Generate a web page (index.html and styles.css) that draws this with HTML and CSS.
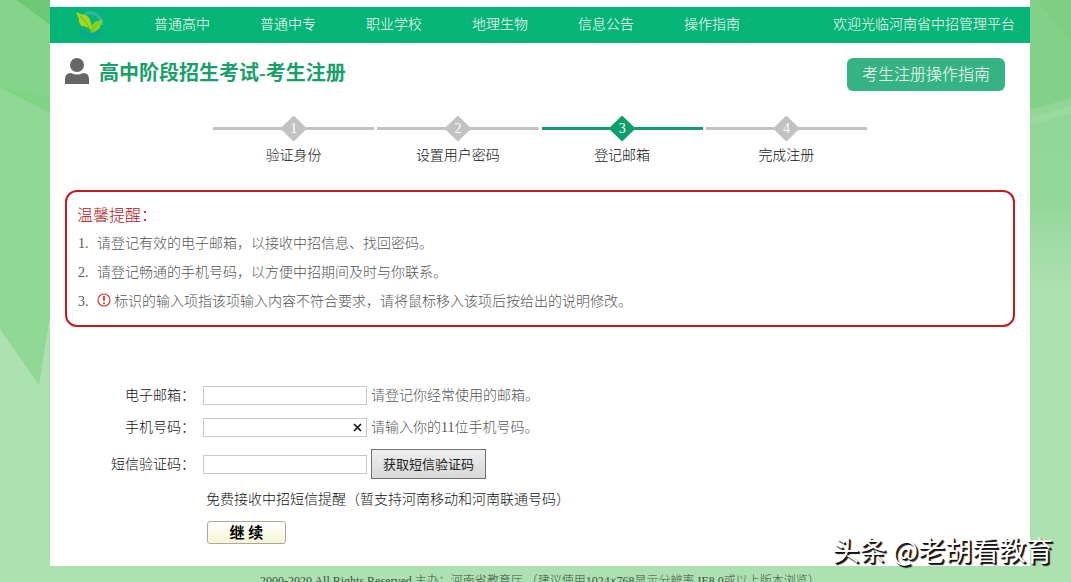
FILE: index.html
```html
<!DOCTYPE html>
<html lang="zh-CN">
<head>
  <meta charset="UTF-8">
  <title>高中阶段招生考试-考生注册</title>
  <link rel="stylesheet" href="styles.css">
</head>
<body>
  <svg class="bg bg-left" width="50" height="390" viewBox="0 0 50 390" aria-hidden="true">
    <path d="M0 0H50V316L39 385L0 329Z" fill="#90d896"/>
    <path d="M0 0H50V113L0 87Z" fill="#85d48b"/>
    <path d="M0 87L50 97V113Z" fill="#80d284"/>
    <path d="M17 0H50V25Z" fill="#6dc974"/>
  </svg>
  <svg class="bg bg-right" width="41" height="290" viewBox="0 0 41 290" aria-hidden="true">
    <defs>
      <linearGradient id="fade" x1="0" y1="0" x2="0" y2="1">
        <stop offset="0" stop-color="#8ed494"/>
        <stop offset=".7" stop-color="#94d79a"/>
        <stop offset="1" stop-color="#aee1b1"/>
      </linearGradient>
    </defs>
    <path d="M0 0H41V290H0Z" fill="url(#fade)"/>
    <path d="M0 0H41V98L0 110Z" fill="#83d088"/>
    <path d="M7 0H41V42Z" fill="#7dce80"/>
    <path d="M0 118L41 106V114L0 125Z" fill="#9adaa0"/>
  </svg>

  <div class="wrap">
    <header class="nav">
      <svg class="logo" width="30" height="28" viewBox="0 0 30 28" aria-hidden="true">
        <path d="M10 3A12 12 0 0 1 27 14" fill="none" stroke="#31b5a8" stroke-width="3"/>
        <path d="M6 18A11 11 0 0 0 26 18" fill="none" stroke="#0ca59a" stroke-width="4"/>
        <path d="M1 1Q6 4 11 4Q17 8 17 20Q12 15 7 15Q3 12 4 8Z" fill="#a4d71a"/>
        <path d="M28 9Q24 9 20 11Q15 15 16 22Q22 20 25 17Q26 12 28 9Z" fill="#8ed31e"/>
        <path d="M5 5Q13 11 16 22Q18 15 25 11" fill="none" stroke="#6fba1a"/>
      </svg>
      <nav class="menu">
        <a href="#">普通高中</a>
        <a href="#">普通中专</a>
        <a href="#">职业学校</a>
        <a href="#">地理生物</a>
        <a href="#">信息公告</a>
        <a href="#">操作指南</a>
      </nav>
      <span class="welcome">欢迎光临河南省中招管理平台</span>
    </header>

    <main>
      <div class="title">
        <svg width="24" height="26" viewBox="0 0 24 26" fill="#666" aria-hidden="true">
          <circle cx="12" cy="7" r="7"/>
          <path d="M0 26V21Q0 15 6 15Q12 18 18 15Q24 15 24 21V26Z"/>
        </svg>
        <h1>高中阶段招生考试-考生注册</h1>
        <button type="button" class="guide">考生注册操作指南</button>
      </div>

      <ol class="steps">
        <li><i><b>1</b></i>验证身份</li>
        <li><i><b>2</b></i>设置用户密码</li>
        <li class="on"><i><b>3</b></i>登记邮箱</li>
        <li><i><b>4</b></i>完成注册</li>
      </ol>

      <section class="tips">
        <h2>温馨提醒：</h2>
        <ol>
          <li>请登记有效的电子邮箱，以接收中招信息、找回密码。</li>
          <li>请登记畅通的手机号码，以方便中招期间及时与你联系。</li>
          <li><svg width="14" height="14" viewBox="0 0 14 14" aria-hidden="true"><circle cx="7" cy="7" r="6" fill="none" stroke="#d03a34" stroke-width="1.2"/><path d="M7 3V8M7 9.5V11" stroke="#d03a34" stroke-width="1.8"/></svg>标识的输入项指该项输入内容不符合要求，请将鼠标移入该项后按给出的说明修改。</li>
        </ol>
      </section>

      <form>
        <div class="row">
          <label for="email">电子邮箱：</label>
          <input type="text" id="email">
          <span class="hint">请登记你经常使用的邮箱。</span>
        </div>
        <div class="row">
          <label for="phone">手机号码：</label>
          <span class="field">
            <input type="text" id="phone">
            <button type="button" class="clear" aria-label="清除"><svg width="9" height="9" viewBox="0 0 9 9"><path d="M1 1L8 8M8 1L1 8" stroke="#111" stroke-width="1.6"/></svg></button>
          </span>
          <span class="hint">请输入你的11位手机号码。</span>
        </div>
        <div class="row code">
          <label for="code">短信验证码：</label>
          <input type="text" id="code">
          <button type="button" class="sms">获取短信验证码</button>
        </div>
        <p>免费接收中招短信提醒（暂支持河南移动和河南联通号码）</p>
        <button type="submit" class="next">继 续</button>
      </form>
    </main>

    <footer>2000-2020 All Rights Reserved 主办：河南省教育厅 （建议使用1024×768显示分辨率,IE8.0或以上版本浏览）</footer>
  </div>
  <div class="mark">头条 @老胡看教育</div>
</body>
</html>
```
FILE: styles.css
```css
* { box-sizing: border-box; }
body { margin: 0; height: 100vh; overflow: hidden; position: relative; background: #aee1b1; color: #111; font: 300 14px/20px "Liberation Serif", "Noto Sans CJK SC", serif; }
h1, h2, p, ol { margin: 0; padding: 0; }
button, input { font-family: inherit; }
a { color: inherit; text-decoration: none; }

.bg { position: absolute; top: 0; }
.bg-left { left: 0; }
.bg-right { right: 0; }

.wrap { margin: 0 41px 0 50px; }
.nav { display: flex; align-items: center; height: 43px; border-top: 7px solid #fff; padding: 0 15px 0 25px; background: #05b577; color: #fff; }
.menu { display: flex; gap: 50px; margin-left: 49px; }
.welcome { margin-left: auto; }

main { background: #fff; padding: 15px 15px 22px; }
.title { display: flex; align-items: flex-start; height: 33px; padding-right: 10px; }
h1 { margin-left: 10px; font-size: 20px; line-height: 30px; color: #17a068; }
.guide { margin-left: auto; height: 33px; padding: 0 15px 4px; border: 0; border-radius: 6px; background: #36b384; color: #fff; font-size: 16px; font-weight: 300; }

.steps { display: flex; gap: 3px; width: 654px; margin: 24px auto 0 148px; list-style: none; }
.steps li { flex: 1; text-align: center; }
.steps i { display: flex; align-items: center; justify-content: center; height: 27px; margin-bottom: 4px; font-style: normal; background: linear-gradient(#c2c2c2, #c2c2c2) center / 100% 3px no-repeat; }
.steps b { display: block; width: 27px; line-height: 26px; clip-path: polygon(50% 0, 100% 50%, 50% 100%, 0 50%); background: #c2c2c2; color: #fff; font-weight: 400; }
.steps .on i { background-image: linear-gradient(#159c6a, #159c6a); }
.steps .on b { background: #0d9f69; }

.tips { margin-top: 24px; padding: 12px 10px 8px; border: 2px solid #c01d22; border-radius: 12px; color: #555; }
.tips h2 { margin-bottom: 2px; font-size: 16px; line-height: 24px; font-weight: 300; color: #b01820; }
.tips ol { padding-left: 15px; line-height: 28px; }
.tips li { margin-bottom: 1px; padding-left: 5px; }
.tips svg { margin-right: 3px; vertical-align: -1px; }

form { margin-top: 54px; }
.row { display: flex; align-items: center; height: 28px; margin-bottom: 4px; }
.row label { width: 130px; margin-right: 8px; padding-top: 2px; text-align: right; }
.row input { width: 164px; height: 19px; padding: 0 4px; border: 1px solid #c8c8c8; background: #fff; }
.row.code { height: 30px; margin: 8px 0 11px; }
.field { position: relative; display: flex; }
.clear { position: absolute; right: 5px; top: 5px; display: flex; padding: 0; border: 0; background: none; }
.hint { margin-left: 4px; padding-top: 2px; color: #555; }
.sms { width: 115px; height: 30px; margin-left: 4px; padding: 0 0 2px; border: 1px solid #707070; background: linear-gradient(#efefef, #d8d8d8); color: #222; font-size: 13px; }
form p { margin-left: 141px; }
.next { display: block; width: 79px; height: 23px; margin: 11px 0 0 142px; padding: 0; border: 1px solid #aaa998; border-radius: 3px; background: linear-gradient(#fff, #f7f5d4); color: #000; font-size: 15px; font-weight: 700; line-height: 20px; }

footer { margin-top: 5px; text-align: center; font-size: 12px; color: #3c5040; white-space: nowrap; }
.mark { position: absolute; right: 18px; bottom: 15px; color: #fff; font: 400 27px/34px "Noto Sans CJK SC", sans-serif; text-shadow: 1px 1px 0 #111, 2px 2px 1px #111; }
```
